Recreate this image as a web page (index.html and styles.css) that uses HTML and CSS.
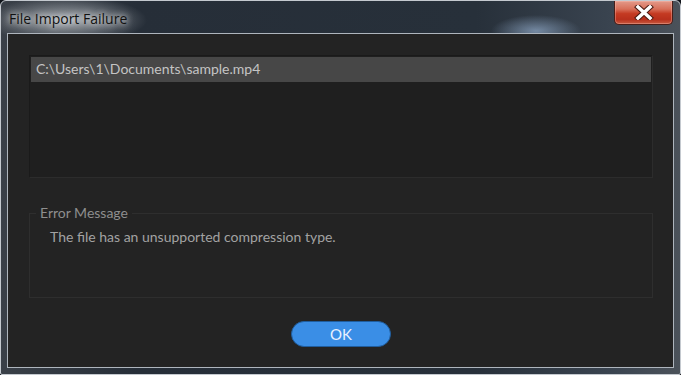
FILE: index.html
```html
<!DOCTYPE html>
<html lang="en">
<head>
    <meta charset="UTF-8">
    <meta name="viewport" content="width=device-width, initial-scale=1.0">
    <title>File Import Failure</title>
    <link rel="stylesheet" href="styles.css">
</head>
<body>
    <div class="window">
        <!-- Title Bar -->
        <div class="titlebar">
            <span class="title">File Import Failure</span>
            <div class="close-btn">
                <svg width="24" height="15" viewBox="0 0 24 15">
                    <path d="M6 2 L18 13 M18 2 L6 13" stroke="#4a1a12" stroke-width="5.5" stroke-linecap="square"/>
                    <path d="M6 2 L18 13 M18 2 L6 13" stroke="#ffffff" stroke-width="3.5" stroke-linecap="square"/>
                </svg>
            </div>
        </div>

        <!-- Dialog Content -->
        <div class="client">
            <div class="file-list">
                <div class="file-row selected">C:\Users\1\Documents\sample.mp4</div>
            </div>

            <fieldset class="error-box">
                <legend>Error Message</legend>
                <p class="error-text">The file has an unsupported compression type.</p>
            </fieldset>

            <div class="actions">
                <button class="ok-button">OK</button>
            </div>
        </div>
    </div>
</body>
</html>
```

FILE: styles.css
```css
body {
    margin: 0;
    width: 681px;
    height: 375px;
    overflow: hidden;
    background-color: #10141a;
    font-family: Lato, "Open Sans", sans-serif;
}

.window {
    box-sizing: border-box;
    width: 681px;
    height: 375px;
    display: flex;
    flex-direction: column;
    border: 1px solid #c4c9cf;
    border-radius: 6px 6px 2px 2px;
    background:
        radial-gradient(ellipse 80px 24px at 66px 19px, rgba(190, 195, 200, 0.8), rgba(190, 195, 200, 0) 100%),
        radial-gradient(ellipse 45px 16px at 535px 30px, rgba(140, 165, 195, 0.75), rgba(140, 165, 195, 0) 100%),
        linear-gradient(90deg, #3a4048 0%, #262e38 20%, #27303a 70%, #3a4450 90%, #4b525a 100%);
}

.titlebar {
    height: 32px;
    display: flex;
    justify-content: space-between;
    align-items: flex-start;
    padding-left: 8px;
    padding-right: 7px;
}

.title {
    margin-top: 8px;
    font-family: "Open Sans", sans-serif;
    font-size: 14px;
    color: #111;
    text-shadow: 0 0 6px rgba(255, 255, 255, 0.9), 0 0 10px rgba(255, 255, 255, 0.6);
}

.close-btn {
    width: 57px;
    height: 23px;
    display: flex;
    justify-content: center;
    align-items: center;
    border: 1px solid #4a1e18;
    border-top: none;
    border-radius: 0 0 5px 5px;
    background: linear-gradient(#e39a8a 0%, #d8705a 35%, #c43a22 55%, #b8301c 80%, #c85a40 100%);
    box-shadow: inset 0 0 0 1px rgba(255, 200, 190, 0.35);
}

.client {
    flex: 1;
    margin: 0 6px 6px 6px;
    border: 1px solid #aeb5bd;
    background-color: #232323;
    padding: 21px 20px 0 21px;
    display: flex;
    flex-direction: column;
}

.file-list {
    height: 123px;
    box-sizing: border-box;
    border: 1px solid #1a1a1a;
    border-right-color: #2c2c2c;
    border-bottom-color: #2c2c2c;
    background-color: #1f1f1f;
    padding: 1px;
}

.file-row {
    height: 25px;
    line-height: 24px;
    padding-left: 5px;
    font-size: 14px;
    color: #c4c4c4;
}

.file-row.selected {
    background-color: #474747;
}

.error-box {
    margin: 27px 0 0 0;
    padding: 0 6px 0 6px;
    height: 93px;
    box-sizing: border-box;
    border: 1px solid #2e2e2e;
}

.error-box legend {
    padding: 0 4px;
    font-size: 14px;
    color: #8e8e8e;
    line-height: 16px;
}

.error-text {
    margin: 7px 0 0 14px;
    font-size: 14px;
    color: #a2a2a2;
}

.actions {
    display: flex;
    justify-content: center;
    margin-top: 23px;
}

.ok-button {
    width: 100px;
    height: 26px;
    border: 1px solid #1f5d9e;
    border-radius: 13px;
    background-color: #3a8ee6;
    color: #e8f1ff;
    font-family: Lato, "Open Sans", sans-serif;
    font-size: 15px;
    padding: 0;
    cursor: pointer;
}
```
